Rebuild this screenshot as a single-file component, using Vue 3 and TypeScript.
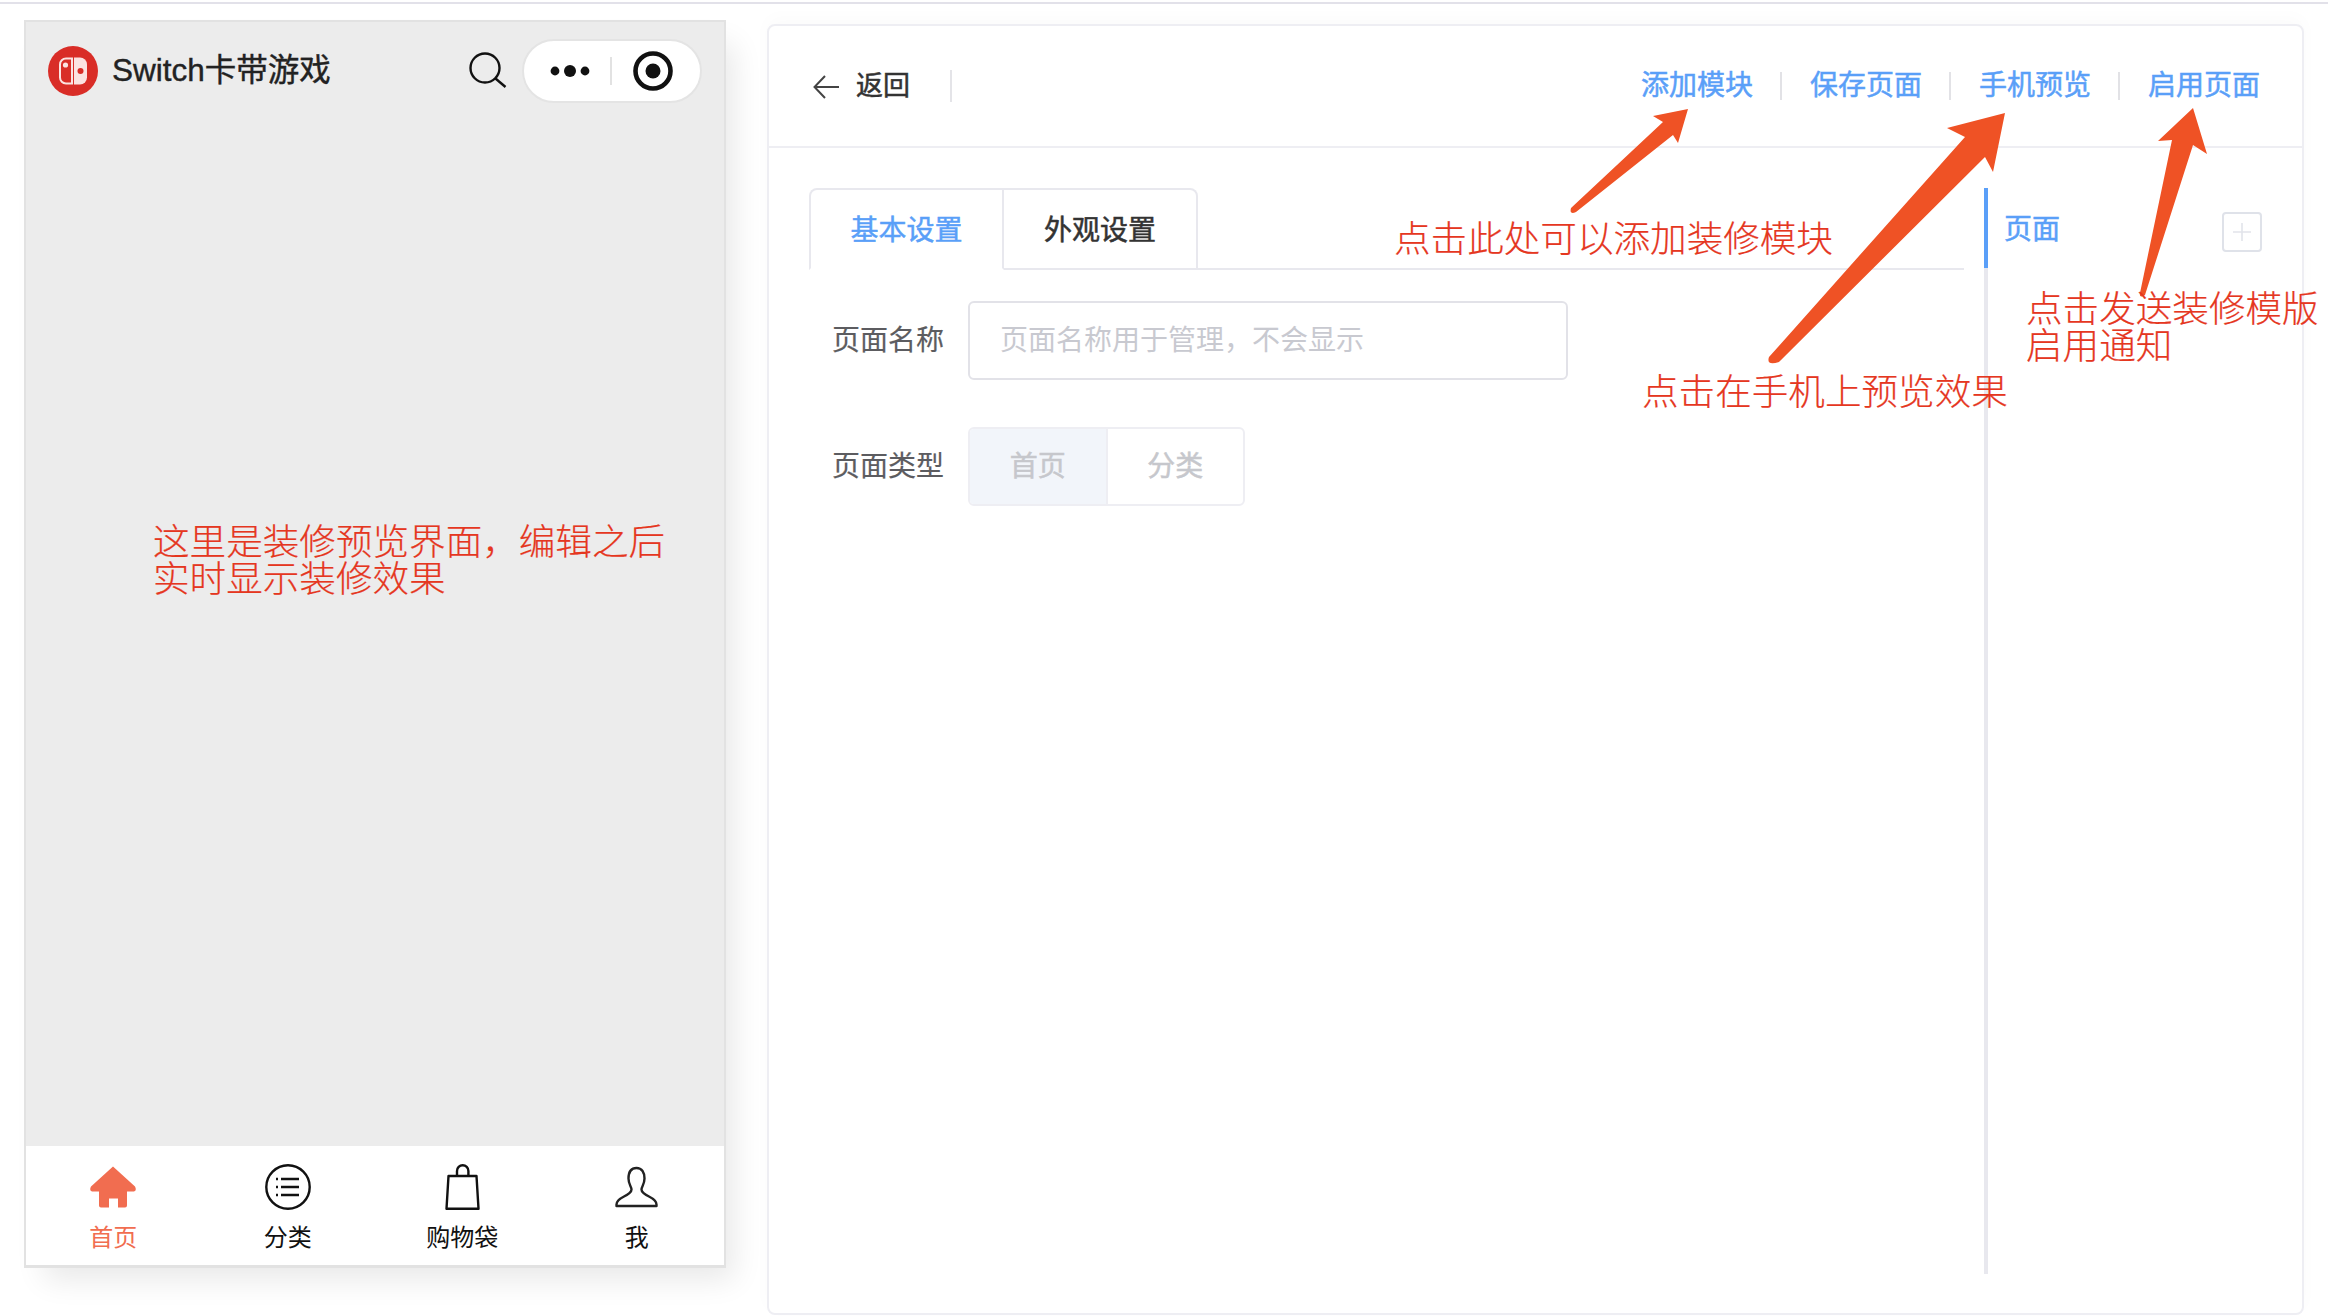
<script setup lang="ts">
import { ref } from "vue";

const actions = ["添加模块", "保存页面", "手机预览", "启用页面"];
const tabs = ["基本设置", "外观设置"];
const pageTypes = ["首页", "分类"];

const activeTab = ref(0);
const activeType = ref(0);

// notes drawn on top of the screenshot, left/top in page pixels
const notes = [
  { left: 153, top: 521, lines: ["这里是装修预览界面，编辑之后", "实时显示装修效果"] },
  { left: 1394, top: 218, lines: ["点击此处可以添加装修模块"] },
  { left: 1642, top: 371, lines: ["点击在手机上预览效果"] },
  { left: 2026, top: 288, lines: ["点击发送装修模版", "启用通知"] },
];

const arrows = [
  "M1571 208 L1663 122 L1653 116 L1688 109 L1678 143 L1673 135 L1576 212 Q1569 215 1571 208 Z",
  "M1769 357 L1965 137 L1947 128 L2005 113 L1993 172 L1985 157 L1779 362 Q1766 366 1769 357 Z",
  "M2140 293 L2172 140 L2158 141 L2193 108 L2207 154 L2193 145 L2145 295 Q2139 299 2140 293 Z",
];
</script>

<template>
  <div class="page">
    <div class="top-line"></div>
    <div class="workspace">
      <!-- phone preview -->
      <section class="phone">
        <header class="phone-nav">
          <svg class="logo" width="50" height="50" viewBox="0 0 50 50">
            <circle cx="25" cy="25" r="25" fill="#d92d27" />
            <path d="M18 12.5 H24 V37.5 H18 A6 6 0 0 1 12 31.5 V18.5 A6 6 0 0 1 18 12.5 Z" fill="none" stroke="#fbe3e1" stroke-width="2" />
            <circle cx="17.5" cy="19" r="2.6" fill="#fbe3e1" />
            <path d="M26 11.5 H32 A7 7 0 0 1 39 18.5 V31.5 A7 7 0 0 1 32 38.5 H26 Z" fill="#fbe3e1" />
            <circle cx="32.5" cy="25" r="3" fill="#d92d27" />
          </svg>
          <span class="shop-name">Switch卡带游戏</span>
          <svg class="search" width="38" height="36" viewBox="0 0 38 36">
            <circle cx="16" cy="16" r="14.5" fill="none" stroke="#111" stroke-width="2.4" />
            <path d="M26.5 26.5 L36.5 35" stroke="#111" stroke-width="2.4" fill="none" />
          </svg>
          <div class="capsule">
            <svg width="40" height="14" viewBox="0 0 40 14">
              <circle cx="5" cy="7" r="4.4" fill="#111" />
              <circle cx="20" cy="7" r="6" fill="#111" />
              <circle cx="35" cy="7" r="4.4" fill="#111" />
            </svg>
            <i class="capsule-sep"></i>
            <svg width="40" height="40" viewBox="0 0 40 40">
              <circle cx="20" cy="20" r="17.5" fill="none" stroke="#111" stroke-width="4.6" />
              <circle cx="20" cy="20" r="7.5" fill="#111" />
            </svg>
          </div>
        </header>
        <div class="phone-body"></div>
        <nav class="tabbar">
          <div class="tabbar-item active">
            <svg width="46" height="41" viewBox="0 0 46 41">
              <path d="M23 0 L45 20 Q47 24 44 25 L37 25 L37 39 Q37 41 35 41 L28 41 L28 32 L19 32 L19 41 L11 41 Q9 41 9 39 L9 25 L2 25 Q-1 24 1 20 Z" fill="#f16d50" />
            </svg>
            <span>首页</span>
          </div>
          <div class="tabbar-item">
            <svg width="46" height="46" viewBox="0 0 46 46">
              <circle cx="23" cy="23" r="21.7" fill="none" stroke="#111" stroke-width="2.4" />
              <path d="M16 15 H34 M16 23 H34 M16 31 H34" stroke="#111" stroke-width="2.4" />
              <path d="M11 15 H13 M11 23 H13 M11 31 H13" stroke="#111" stroke-width="2.4" />
            </svg>
            <span>分类</span>
          </div>
          <div class="tabbar-item">
            <svg width="35" height="46" viewBox="0 0 35 46">
              <path d="M3.5 12 H31.5 L33.5 44.8 H1.5 Z" fill="none" stroke="#111" stroke-width="2.4" stroke-linejoin="round" />
              <path d="M12 12 V7 A5.7 5.7 0 0 1 23.4 7 V12" fill="none" stroke="#111" stroke-width="2.4" />
            </svg>
            <span>购物袋</span>
          </div>
          <div class="tabbar-item">
            <svg width="43" height="41" viewBox="0 0 43 41">
              <path d="M21.5 1.5 C16 1.5 13.5 6 13.5 12 C13.5 18 16.5 20 16.5 23 C16.5 26 13 28 9 30 C5 32 1.5 35 1.5 38 L1.5 39.5 L41.5 39.5 L41.5 38 C41.5 35 38 32 34 30 C30 28 26.5 26 26.5 23 C26.5 20 29.5 18 29.5 12 C29.5 6 27 1.5 21.5 1.5 Z" fill="none" stroke="#222" stroke-width="2.4" stroke-linejoin="round" />
            </svg>
            <span>我</span>
          </div>
        </nav>
      </section>

      <!-- editor panel -->
      <section class="panel">
        <header class="panel-head">
          <svg class="back-icon" width="26" height="24" viewBox="0 0 26 24">
            <path d="M12 1 L1.5 12 L12 23 M1.5 12 H26" fill="none" stroke="#444" stroke-width="2" />
          </svg>
          <span class="back-text">返回</span>
          <i class="head-sep"></i>
          <div class="actions">
            <template v-for="(action, index) in actions" :key="action">
              <i v-if="index > 0" class="action-sep"></i>
              <a class="action">{{ action }}</a>
            </template>
          </div>
        </header>

        <div class="panel-body">
          <div class="editor">
            <div class="tabs">
              <div
                v-for="(tab, index) in tabs"
                :key="tab"
                :class="`tab ${activeTab === index ? 'active' : ''}`"
                @click="activeTab = index"
              >
                {{ tab }}
              </div>
            </div>
            <div class="form-row">
              <label class="form-label">页面名称</label>
              <input class="form-input" type="text" placeholder="页面名称用于管理，不会显示" />
            </div>
            <div class="form-row">
              <label class="form-label">页面类型</label>
              <div class="segments">
                <div
                  v-for="(type, index) in pageTypes"
                  :key="type"
                  :class="`segment ${activeType === index ? 'active' : ''}`"
                >
                  {{ type }}
                </div>
              </div>
            </div>
          </div>

          <aside class="sidebar">
            <div class="sidebar-item">
              <span>页面</span>
              <div class="add-box">
                <svg width="18" height="18" viewBox="0 0 18 18">
                  <path d="M9 0 V18 M0 9 H18" stroke="#e2e4ea" stroke-width="1.6" />
                </svg>
              </div>
            </div>
          </aside>
        </div>
      </section>
    </div>

    <!-- annotations laid over the screenshot -->
    <svg class="arrows" width="2328" height="1316" viewBox="0 0 2328 1316">
      <path v-for="d in arrows" :key="d" :d="d" fill="#ef5225" />
    </svg>
    <div
      v-for="note in notes"
      :key="note.left"
      class="note"
      :style="{ left: `${note.left}px`, top: `${note.top}px` }"
    >
      <div v-for="line in note.lines" :key="line">{{ line }}</div>
    </div>
  </div>
</template>

<style>
html,
body {
  margin: 0;
  background: #fff;
}
</style>

<style scoped>
.page {
  position: relative;
  width: 2328px;
  height: 1316px;
  overflow: hidden;
  background: #fff;
  font-family: "Liberation Sans", "Noto Sans CJK SC", sans-serif;
}
.top-line {
  height: 2px;
  margin-top: 2px;
  background: #e2e1e9;
}
.workspace {
  display: flex;
  align-items: flex-start;
  gap: 41px;
  padding: 16px 24px 0 24px;
}

/* phone */
.phone {
  display: flex;
  flex-direction: column;
  box-sizing: border-box;
  width: 702px;
  height: 1248px;
  flex-shrink: 0;
  border: 2px solid #e2e2e2;
  border-bottom-width: 3px;
  background: #ececec;
  box-shadow: 14px 18px 28px -6px rgba(0, 0, 0, 0.09);
}
.phone-nav {
  display: flex;
  align-items: center;
  height: 98px;
  padding: 0 22px 0 22px;
}
.shop-name {
  margin-left: 14px;
  margin-top: -3px;
  font-size: 31.5px;
  line-height: 40px;
  color: #222;
  -webkit-text-stroke: 0.4px #222;
}
.search {
  margin-left: auto;
  margin-top: -2px;
}
.capsule {
  display: flex;
  align-items: center;
  box-sizing: border-box;
  width: 180px;
  height: 64px;
  margin-left: 15px;
  padding-left: 26px;
  border: 2px solid #e4e4e4;
  border-radius: 32px;
  background: #fff;
}
.capsule-sep {
  width: 2px;
  height: 28px;
  margin: 0 21px 0 20px;
  background: #e2e2e2;
}
.phone-body {
  flex: 1;
}
.tabbar {
  display: grid;
  grid-template-columns: repeat(4, 1fr);
  height: 119px;
  background: #fff;
}
.tabbar-item {
  position: relative;
  display: flex;
  flex-direction: column;
  align-items: center;
  padding-top: 18px;
  font-size: 24px;
  line-height: 32px;
  color: #111;
}
.tabbar-item svg {
  height: 46px;
}
.tabbar-item span {
  position: absolute;
  top: 76px;
}
.tabbar-item.active {
  color: #f16d50;
}

/* editor panel */
.panel {
  box-sizing: border-box;
  width: 1537px;
  height: 1291px;
  margin-top: 4px;
  border: 2px solid #eeeef3;
  border-radius: 8px;
  background: #fff;
  box-shadow: 0 -6px 18px rgba(0, 0, 0, 0.02);
}
.panel-head {
  display: flex;
  align-items: center;
  box-sizing: border-box;
  height: 122px;
  padding: 0 42px 0 44px;
  border-bottom: 2px solid #eeeef3;
}
.back-icon {
  margin-top: 1px;
}
.back-text {
  margin-left: 17px;
  font-size: 27px;
  line-height: 36px;
  color: #333;
  -webkit-text-stroke: 0.5px #333;
}
.head-sep {
  width: 2px;
  height: 32px;
  margin-left: 40px;
  background: #e4e4e8;
}
.actions {
  display: flex;
  align-items: center;
  gap: 27.5px;
  margin-left: auto;
  margin-top: 0;
}
.action {
  font-size: 28px;
  line-height: 36px;
  color: #5a9ff8;
  -webkit-text-stroke: 0.5px #5a9ff8;
  cursor: pointer;
}
.action-sep {
  width: 2px;
  height: 28px;
  background: #e2e2e6;
}
.panel-body {
  display: flex;
  padding: 40px 0 0 40px;
}
.editor {
  width: 1155px;
  flex-shrink: 0;
}
.tabs {
  display: flex;
  height: 80px;
  margin-bottom: 31px;
  border-bottom: 2px solid #e8e8ee;
}
.tab {
  box-sizing: border-box;
  width: 194px;
  height: 82px;
  padding-top: 23px;
  border: 2px solid #e8e8ee;
  border-left-width: 0;
  font-size: 28px;
  line-height: 36px;
  text-align: center;
  color: #333;
  -webkit-text-stroke: 0.5px #333;
  cursor: pointer;
}
.tab:first-child {
  width: 195px;
  border-left-width: 2px;
  border-top-left-radius: 8px;
}
.tab:last-child {
  border-top-right-radius: 8px;
}
.tab.active {
  border-bottom-color: #fff;
  color: #5a9ff8;
  -webkit-text-stroke-color: #5a9ff8;
}
.form-row {
  display: flex;
  align-items: center;
  margin-bottom: 47px;
  padding-left: 23px;
}
.form-label {
  width: 136px;
  font-size: 28px;
  line-height: 36px;
  color: #5c5c60;
  -webkit-text-stroke: 0.2px #5c5c60;
}
.form-input {
  box-sizing: border-box;
  width: 600px;
  height: 79px;
  padding: 0 30px;
  border: 2px solid #e2e2e8;
  border-radius: 6px;
  outline: none;
  font-family: inherit;
  font-size: 28px;
  color: #333;
}
.form-input::placeholder {
  color: #c8c9d0;
}
.segments {
  display: flex;
  box-sizing: border-box;
  width: 277px;
  height: 79px;
  border: 2px solid #eeeef3;
  border-radius: 6px;
  overflow: hidden;
}
.segment {
  flex: 1;
  font-size: 28px;
  line-height: 75px;
  text-align: center;
  color: #c6c7cc;
  -webkit-text-stroke: 0.5px #c6c7cc;
}
.segment.active {
  border-right: 2px solid #eeeef3;
  background: #f2f5fa;
}
.sidebar {
  box-sizing: border-box;
  width: 316px;
  height: 1086px;
  margin-left: 20px;
  border-left: 4px solid #e8e8ee;
}
.sidebar-item {
  display: flex;
  align-items: center;
  justify-content: space-between;
  box-sizing: border-box;
  height: 80px;
  margin-left: -4px;
  padding: 0 38px 0 16px;
  border-left: 4px solid #5a9ff8;
  font-size: 28px;
  color: #5a9ff8;
  -webkit-text-stroke: 0.5px #5a9ff8;
}
.sidebar-item span {
  margin-top: -2px;
}
.add-box {
  display: flex;
  align-items: center;
  justify-content: center;
  box-sizing: border-box;
  width: 40px;
  height: 40px;
  margin-top: 8px;
  border: 2px solid #dfe2e9;
  border-radius: 4px;
}

/* annotations */
.arrows {
  position: absolute;
  left: 0;
  top: 0;
  pointer-events: none;
}
.note {
  position: absolute;
  font-family: "Noto Sans CJK SC", sans-serif;
  font-size: 36.6px;
  font-weight: 300;
  line-height: 37px;
  white-space: nowrap;
  color: #e5371f;
  -webkit-text-stroke: 0.2px #e5371f;
}
</style>
